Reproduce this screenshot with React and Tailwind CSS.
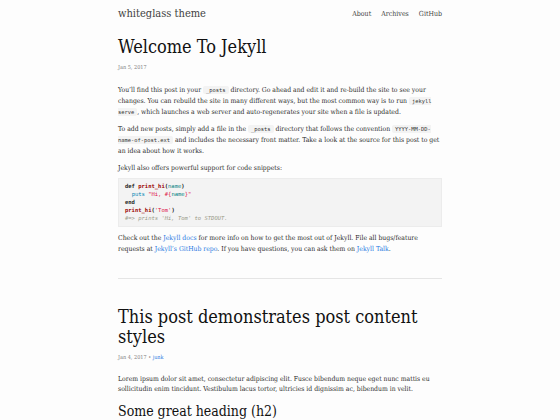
import React from "react";

const Code = ({ children }) => (
  <code className="font-['DejaVu_Sans_Mono',monospace] text-[5.4px] px-[3px] py-[1px] bg-[#f3f3f3] rounded-[2px] text-[#333]">{children}</code>
);

export default function App() {
  return (
    <div className="min-h-[420px] w-[560px] bg-[#fdfdfd] text-[#111] font-['DejaVu_Serif',serif] font-stretch-condensed">
      <div className="mx-auto w-[324px]">
        <header className="flex items-center justify-between pt-[4px] h-[24px]">
          <span className="text-[11px] text-[#424242]">whiteglass theme</span>
          <nav className="flex gap-[10px] text-[7px] text-[#424242]">
            <span>About</span>
            <span>Archives</span>
            <span>GitHub</span>
          </nav>
        </header>

        <article className="pt-[10px]">
          <h1 className="text-[18px] leading-[26px] text-[#111]">Welcome To Jekyll</h1>
          <div className="text-[5.5px] text-[#828282] mt-[3px]">Jan 5, 2017</div>
          <div className="mt-[14px] text-[6.8px] leading-[10.8px] text-[#2b2b2b]">
            <p>
              You’ll find this post in your <Code>_posts</Code> directory. Go ahead and edit it and re-build the site to see your changes. You can rebuild the site in many different ways, but the most common way is to run <Code>jekyll serve</Code>, which launches a web server and auto-regenerates your site when a file is updated.
            </p>
            <p className="mt-[6.5px]">
              To add new posts, simply add a file in the <Code>_posts</Code> directory that follows the convention <Code>YYYY-MM-DD-name-of-post.ext</Code> and includes the necessary front matter. Take a look at the source for this post to get an idea about how it works.
            </p>
            <p className="mt-[6px]">Jekyll also offers powerful support for code snippets:</p>
            <pre className="mt-[5px] bg-[#f3f3f3] border border-[#ececec] px-[6px] pt-[3px] pb-[4px] text-[5.5px] leading-[8px] text-[#222] font-bold font-['DejaVu_Sans_Mono',monospace]">
              <div>def <span className="text-[#990000]">print_hi</span>(<span className="text-[#008080] font-normal">name</span>)</div>
              <div>  <span className="text-[#0086b3] font-normal">puts</span> <span className="text-[#dd1144] font-normal">"Hi, #{"{"}<span className="text-[#008080]">name</span>{"}"}"</span></div>
              <div>end</div>
              <div><span className="text-[#990000]">print_hi</span>(<span className="text-[#dd1144] font-normal">'Tom'</span>)</div>
              <div className="text-[#999988] italic font-normal">#=&gt; prints 'Hi, Tom' to STDOUT.</div>
            </pre>
            <p className="mt-[5.5px]">
              Check out the <a className="text-[#2a7ae2]">Jekyll docs</a> for more info on how to get the most out of Jekyll. File all bugs/feature requests at <a className="text-[#2a7ae2]">Jekyll’s GitHub repo</a>. If you have questions, you can ask them on <a className="text-[#2a7ae2]">Jekyll Talk</a>.
            </p>
          </div>
        </article>

        <hr className="mt-[24px] border-0 h-[1px] bg-[#e5e5e5]" />

        <article className="pt-[28px]">
          <h1 className="text-[18px] leading-[20px] text-[#111]">This post demonstrates post content styles</h1>
          <div className="text-[5.5px] text-[#828282] mt-[6px]">Jan 4, 2017 • <span className="text-[#2a7ae2]">junk</span></div>
          <div className="mt-[12px] text-[6.8px] leading-[10.8px] text-[#2b2b2b]">
            <p>Lorem ipsum dolor sit amet, consectetur adipiscing elit. Fusce bibendum neque eget nunc mattis eu sollicitudin enim tincidunt. Vestibulum lacus tortor, ultricies id dignissim ac, bibendum in velit.</p>
            <h2 className="mt-[6px] text-[14px] leading-[20px] text-[#111]">Some great heading (h2)</h2>
          </div>
        </article>
      </div>
    </div>
  );
}
